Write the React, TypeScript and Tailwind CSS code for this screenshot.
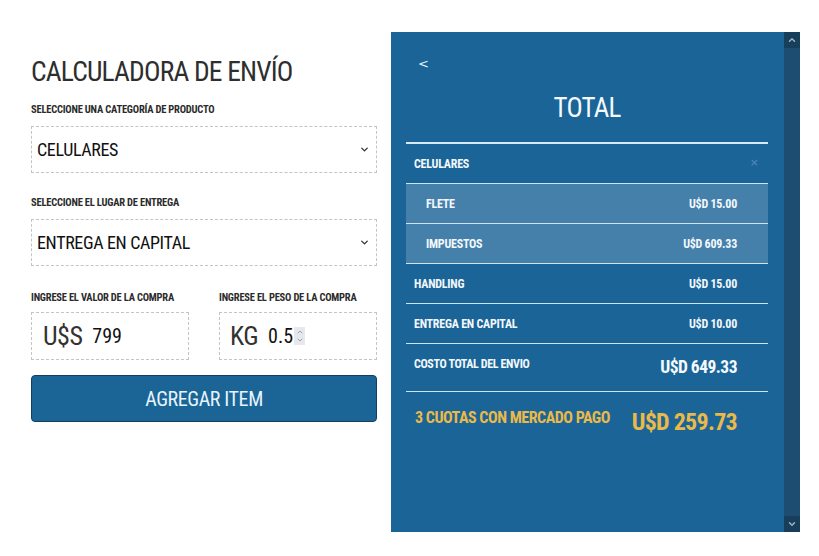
import React from 'react';
import { ChevronDown, ChevronUp } from 'lucide-react';

const cond = "font-['Roboto_Condensed',sans-serif]";

const Label: React.FC<{ children: React.ReactNode }> = ({ children }) => (
  <div className="text-[10.5px] leading-[14px] font-bold tracking-[-0.02em] text-[#2b2b2b] whitespace-nowrap">{children}</div>
);

const SelectBox: React.FC<{ value: string }> = ({ value }) => (
  <div className="mt-[9px] h-[47px] border border-dashed border-[#c4c4c4] flex items-center justify-between pl-[5px] pr-[6px]">
    <span className="text-[18px] text-[#111] tracking-[-0.02em]">{value}</span>
    <ChevronDown className="w-[11px] h-[11px] text-[#333]" strokeWidth={3} />
  </div>
);

const Row: React.FC<{ label: string; value: string; sub?: boolean }> = ({ label, value, sub }) => (
  <div
    className={`h-[40px] border-b border-[#cfe4f3] flex items-center justify-between pr-[31px] ${
      sub ? 'bg-[#4580aa] pl-[20px]' : 'pl-[8px]'
    }`}
  >
    <span className="text-[12px] font-bold tracking-[-0.02em] text-[#f2f8fd] whitespace-nowrap">{label}</span>
    <span className="text-[12px] font-bold tracking-[-0.02em] text-[#f2f8fd] whitespace-nowrap">{value}</span>
  </div>
);

export default function App() {
  return (
    <div className={`w-[819px] h-[556px] bg-white flex ${cond}`}>
      {/* formulario */}
      <div className="w-[346px] ml-[31px] pt-[55px]">
        <h1 className="text-[27.5px] leading-[34px] tracking-[-0.03em] text-[#2e2e2e] whitespace-nowrap">
          CALCULADORA DE ENVÍO
        </h1>

        <div className="mt-[14px]">
          <Label>SELECCIONE UNA CATEGORÍA DE PRODUCTO</Label>
          <SelectBox value="CELULARES" />
        </div>

        <div className="mt-[23px]">
          <Label>SELECCIONE EL LUGAR DE ENTREGA</Label>
          <SelectBox value="ENTREGA EN CAPITAL" />
        </div>

        <div className="mt-[25px] grid grid-cols-[158px_158px] gap-x-[30px]">
          <div>
            <Label>INGRESE EL VALOR DE LA COMPRA</Label>
            <div className="mt-[7px] h-[48px] border border-dashed border-[#c4c4c4] flex items-center pl-[11px] gap-[10px]">
              <span className="text-[26px] text-[#333] tracking-[-0.02em]">U$S</span>
              <span className="text-[20px] text-[#111]">799</span>
            </div>
          </div>
          <div>
            <Label>INGRESE EL PESO DE LA COMPRA</Label>
            <div className="mt-[7px] h-[48px] border border-dashed border-[#c4c4c4] flex items-center pl-[10px] gap-[10px]">
              <span className="text-[26px] text-[#333] tracking-[-0.02em]">KG</span>
              <span className="text-[20px] text-[#111]">0.5</span>
              <span className="-ml-[9px] w-[11px] h-[18px] bg-[#e6e8ee] flex flex-col items-center justify-center">
                <ChevronUp className="w-[8px] h-[8px] text-[#9aa3b4]" strokeWidth={3} />
                <ChevronDown className="w-[8px] h-[8px] text-[#9aa3b4]" strokeWidth={3} />
              </span>
            </div>
          </div>
        </div>

        <button className="mt-[15px] w-full h-[47px] bg-[#1b6596] border border-[#123f5e] rounded-[4px] text-[20px] text-[#e6f4ff] tracking-[-0.02em] flex items-center justify-center">
          AGREGAR ITEM
        </button>
      </div>

      {/* resumen */}
      <div className="ml-[14px] mt-[32px] h-[500px] w-[409px] flex">
        <div className="flex-1 bg-[#1b6497] px-[16px] pl-[15px] pt-[24px]">
          <div className="pl-[12px] text-[13px] leading-[16px] text-[#e6f2fb] font-['DejaVu_Sans',sans-serif]">&lt;</div>
          <div className="mt-[16px] text-center text-[27px] leading-[40px] tracking-[-0.03em] text-[#f4f9fd]">TOTAL</div>
          <div className="mt-[14px] border-t-2 border-[#d7e9f6]">
            <div className="h-[40px] border-b border-[#cfe4f3] flex items-center justify-between pl-[8px] pr-[9px]">
              <span className="text-[12px] font-bold tracking-[-0.02em] text-[#f2f8fd]">CELULARES</span>
              <span className="text-[11px] text-[#4f8cba] font-['DejaVu_Sans',sans-serif]">×</span>
            </div>
            <Row label="FLETE" value="U$D 15.00" sub />
            <Row label="IMPUESTOS" value="U$D 609.33" sub />
            <Row label="HANDLING" value="U$D 15.00" />
            <Row label="ENTREGA EN CAPITAL" value="U$D 10.00" />
            <div className="h-[48px] border-b border-[#cfe4f3] flex items-center justify-between pl-[8px] pr-[31px]">
              <span className="-mt-[8px] text-[12px] font-bold tracking-[-0.03em] text-[#f2f8fd] whitespace-nowrap">
                COSTO TOTAL DEL ENVIO
              </span>
              <span className="text-[17.5px] font-bold tracking-[-0.03em] text-[#f4f9fd] whitespace-nowrap">U$D 649.33</span>
            </div>
            <div className="h-[60px] flex items-center justify-between pl-[9px] pr-[31px]">
              <span className="-mt-[8px] text-[16px] font-bold tracking-[-0.03em] text-[#e9b949] whitespace-nowrap">
                3 CUOTAS CON MERCADO PAGO
              </span>
              <span className="text-[24px] font-bold tracking-[-0.03em] text-[#e9b949] whitespace-nowrap">U$D 259.73</span>
            </div>
          </div>
        </div>
        {/* barra de desplazamiento */}
        <div className="w-[16px] bg-[#1d4d71] flex flex-col justify-between">
          <div className="h-[16px] bg-[#173e5b] flex items-center justify-center">
            <ChevronUp className="w-[10px] h-[10px] text-[#9fb3c4]" strokeWidth={3.5} />
          </div>
          <div className="h-[16px] bg-[#173e5b] flex items-center justify-center">
            <ChevronDown className="w-[10px] h-[10px] text-[#9fb3c4]" strokeWidth={3.5} />
          </div>
        </div>
      </div>
    </div>
  );
}
